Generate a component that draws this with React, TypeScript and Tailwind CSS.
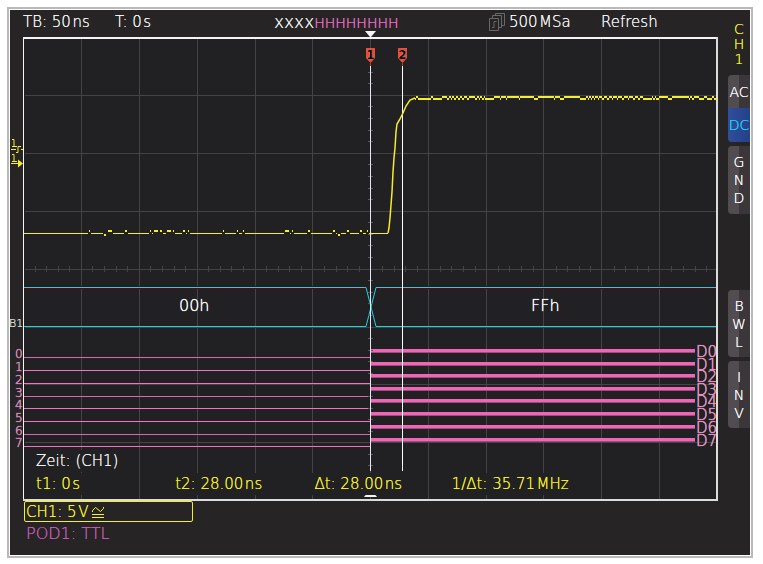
import type { ReactNode } from "react";
import clsx from "clsx";

const GRID_X = [81, 139, 197, 255, 312, 370, 428, 486, 543, 601, 659];
const GRID_Y = [95, 153, 211, 269, 327, 384, 442];
const TICK = 11.58;

const LOW_Y = [357, 370, 383, 396, 408, 421, 434, 446];
const HIGH_Y = [351, 364, 376, 389, 401, 414, 427, 440];

// [start, end, offset] of the noise on the low level
const LOW_NOISE = [
  [89, 90, -2], [104, 106, 2], [108, 112, -2], [125, 127, -2], [150, 151, -2],
  [154, 158, -2], [160, 162, -2], [167, 171, -2], [173, 174, -2],
  [183, 185, -2], [188, 189, -2], [223, 224, -2], [237, 238, -2],
  [243, 244, -2], [285, 289, -2], [292, 293, -2], [308, 310, -2],
  [333, 335, -2], [338, 340, 2], [347, 349, -2], [360, 362, -2],
  [367, 368, -2],
];

// x positions where the high level flips between its two values
const HIGH_FLIPS = [
  415, 416, 418, 431, 433, 442, 447, 449, 451, 452, 454, 456, 458, 460, 462,
  464, 467, 469, 475, 477, 479, 480, 482, 484, 485, 494, 500, 501, 506, 507,
  519, 520, 534, 538, 554, 555, 560, 564, 580, 586, 588, 589, 591, 592, 594,
  595, 598, 599, 602, 604, 607, 609, 612, 613, 617, 618, 622, 624, 628, 629,
  633, 635, 638, 640, 643, 652, 653, 655, 656, 659, 668, 672, 689, 690, 692,
  694, 699, 704, 707, 712, 714, 717,
];

const lowPath =
  "M24 233.5" +
  LOW_NOISE.map(([a, b]) => `H${a - 1}M${b + 1} 233.5`).join("") +
  "H388";

const noisePath = LOW_NOISE.map(([a, b, d]) => `M${a} ${233 + d}H${b}`).join("");

const highPath = HIGH_FLIPS.slice(0, -1)
  .map((x, i) => `M${x} ${i % 2 ? 97 : 99}H${HIGH_FLIPS[i + 1]}`)
  .join("");

const ticks = Array.from({ length: 59 }, (_, i) => i + 1).filter((i) => i % 5);

const Marker = ({ x, label }: { x: number; label: string }) => (
  <g>
    <path d={`M${x - 4} 48h9v10l-3.500 4h-2l-3.500-4z`} fill="#ee4b34" />
    <text
      x={x + 0.5}
      y="59"
      textAnchor="middle"
      className="fill-black text-[12px] font-bold"
    >
      {label}
    </text>
  </g>
);

const Scope = () => (
  <svg
    viewBox="10 37 708 464"
    className="block h-auto w-full overflow-visible"
    role="img"
    aria-label="CH1"
  >
    <rect x="23" y="37" width="695" height="464" fill="#212022" />

    {/* graticule */}
    <g stroke="#444244" shapeRendering="crispEdges">
      {GRID_X.map((x) => (
        <path key={x} d={`M${x + 0.5} 39V499`} />
      ))}
      {GRID_Y.map((y) => (
        <path key={y} d={`M25 ${y + 0.5}H716`} />
      ))}
      {ticks.map((i) => {
        const x = Math.round(23 + i * TICK);
        return <path key={x} d={`M${x + 0.5} 266v6`} />;
      })}
    </g>

    <rect x="23" y="37" width="695" height="2" fill="#f4f4f4" />
    <rect x="23" y="37" width="1" height="464" fill="#f4f4f4" />
    <rect x="716" y="37" width="2" height="464" fill="#dcdcdc" />
    <rect x="23" y="499" width="695" height="2" fill="#dcdcdc" />
    <path d="M365 31h11l-5 6h-1z" fill="#f4f4f4" />
    <path d="M364 497c1-2 3-3 4-4h5c1 1 3 2 4 4z" fill="#f4f4f4" />

    {/* bus */}
    <g fill="none">
      <path d="M24 287.500H366M376 287.500H716" stroke="#4a0d12" strokeWidth="3" />
      <path
        d="M24 287.500H366L376 326.500H716M24 326.500H366L376 287.500H716"
        stroke="#1fd3e0"
      />
    </g>
    <g
      className="fill-white stroke-white text-[16px]"
      strokeOpacity="0.1"
    >
      <text x="179" y="311">00h</text>
      <text x="531" y="311">FFh</text>
    </g>

    {/* digital channels */}
    {LOW_Y.map((y, i) => (
      <g key={y}>
        <path
          d={`M24 ${y + 0.5}H370`}
          stroke={i % 3 ? "#f472c4" : "#d868b0"}
          shapeRendering="crispEdges"
        />
        <rect x="370" y={HIGH_Y[i] - 2} width="325" height="3" fill="#ee66b6" />
        <rect x="370" y={HIGH_Y[i] + 1} width="325" height="1" fill="#a04a80" />
        <text
          x="15"
          y={y + 1}
          strokeOpacity="0.1"
          className="fill-[#e45cbc] stroke-[#e45cbc] text-[12px]"
        >
          {i}
        </text>
        <text
          x="696"
          y={HIGH_Y[i] + 6}
          strokeOpacity="0.1"
          className="fill-[#f070c0] stroke-[#f070c0] text-[15px]"
        >
          {`D${i}`}
        </text>
      </g>
    ))}
    <text x="9" y="327" className="fill-[#d8d8d8] text-[11px]">
      B1
    </text>

    {/* cursors */}
    <g shapeRendering="crispEdges">
      {ticks
        .filter((i) => i > 2 && i < 38)
        .map((i) => (
          <path key={i} d={`M368 ${Math.round(37 + i * TICK) + 0.5}h5`} stroke="#5a585c" />
        ))}
      <path d="M370.500 63V471" stroke="#e6e6ee" />
      <path d="M402.500 63V471" stroke="#ffffff" />
      <path d="M370.500 62v4M402.500 62v4" stroke="#c8362a" />
    </g>
    <Marker x={370} label="1" />
    <Marker x={402} label="2" />

    {/* CH1 trace */}
    <g fill="none" stroke="#f5ee28" shapeRendering="crispEdges">
      <path d={lowPath} />
      <path d={noisePath} strokeWidth="2" />
      <path
        d="M388 233L389 228L390 218L391 205L392 192L393 172L394 158L395 148L396 132L397 124L400 119L403 113L406 106L410 100L415 98"
        strokeWidth="1.500"
        shapeRendering="auto"
      />
      <path d={highPath} strokeWidth="2" />
    </g>

    {/* trigger level and ground position */}
    <g fill="none" stroke="#f5ee28">
      <path d="M12 139.500h2v7M12 146.500h5M11 149.500h5M16 152.500h2v-6h3M21 149.500h2" />
      <path d="M12 154.500h2v7M12 161.500h5M11 163.500h8" />
      <path d="M18 159.500l5 4-5 4z" fill="#f5ee28" stroke="none" />
    </g>
  </svg>
);

const Readout = ({ children }: { children: ReactNode }) => (
  <div>
    <span className="inline-block h-[22px] bg-[#212022] px-1 leading-[22px] whitespace-nowrap">
      {children}
    </span>
  </div>
);

const SideButton = ({
  lines,
  active,
  className,
}: {
  lines: string[];
  active?: boolean;
  className?: string;
}) => (
  <button
    type="button"
    className={clsx(
      "flex w-full flex-col items-center justify-center text-[14px] leading-[18px] [text-shadow:0_0_0_currentColor]",
      active
        ? "bg-linear-to-r from-[#2f4f98] to-[#26408a] text-[#22d4fa]"
        : "bg-linear-to-r from-[#514c50] from-50% to-[#3a3639] to-50% text-white",
      className,
    )}
  >
    {lines.map((l) => (
      <span key={l}>{l}</span>
    ))}
  </button>
);

const App = () => {
  return (
    <div className="bg-white pt-[7px] pr-[10px] pb-[6px] pl-[7px] font-['DejaVu_Sans',sans-serif] font-extralight">
      <div className="border-2 border-[#b9b9b9] bg-white p-px">
        <div className="flex bg-[#272426] pb-[10px] text-[15px] text-[#f4f4f4] [text-shadow:0_0_0_currentColor]">
          <main className="min-w-0 flex-1">
            <header className="grid h-[27px] grid-cols-[92fr_159fr_215fr_112fr_117fr] items-start pl-[13px] leading-6 whitespace-nowrap">
              <span>TB: 50&#8202;ns</span>
              <span>T: 0&#8202;s</span>
              <span>
                <span className="text-[17px]">xxxx</span>
                <span className="text-[14px] text-[#ee70c8]">HHHHHHHH</span>
              </span>
              <span className="flex items-center gap-1">
                <svg viewBox="0 0 16 18" className="h-[18px] w-[16px]" fill="none" stroke="#6a686a">
                  <path d="M.5 5.500h9v12h-9z" />
                  <path d="M3.500 5.500v-3h9v12h-3M6.500 2.500v-2h9v12h-3" />
                  <path d="M3 14.500h2v-6h2.500" />
                </svg>
                500&#8202;MSa
              </span>
              <span>Refresh</span>
            </header>

            <div className="relative">
              <Scope />
              <div className="absolute inset-x-0 bottom-[6px] pl-[22px]">
                <Readout>Zeit: (CH1)</Readout>
                <div className="grid grid-cols-[139fr_139fr_137fr_270fr] text-[#f8f228]">
                  <Readout>t1: 0&#8202;s</Readout>
                  <Readout>t2: 28.00&#8202;ns</Readout>
                  <Readout>Δt: 28.00&#8202;ns</Readout>
                  <Readout>1/Δt: 35.71&#8202;MHz</Readout>
                </div>
              </div>
            </div>

            <footer className="pl-[14px]">
              <div className="flex h-[21px] w-[169px] items-center gap-1 rounded-xs border border-[#f5ee28] pt-px pl-px text-[#f8f228]">
                <span>CH1: 5&#8202;V</span>
                <svg viewBox="0 0 12 12" className="size-3" fill="none" stroke="currentColor">
                  <path d="M.5 6V4.500L3.500 1.500l5 4 3-3V1M0 8.500h12M0 11.500h12" />
                </svg>
              </div>
              <div className="pl-[2px] text-[16px] leading-[23px] text-[#c45ab4]">POD1: TTL</div>
            </footer>
          </main>

          <aside className="ml-[10px] flex w-[22px] flex-col">
            <h2 className="flex h-[65px] flex-col items-center pt-3 text-[14px] leading-[15px] text-[#f8f228]">
              <span>C</span>
              <span>H</span>
              <span>1</span>
            </h2>
            <SideButton lines={["AC"]} className="h-[33px] rounded-tl" />
            <SideButton lines={["DC"]} active className="h-[34px] rounded-bl" />
            <SideButton lines={["G", "N", "D"]} className="mt-1 h-[68px] rounded-l" />
            <SideButton lines={["B", "W", "L"]} className="mt-[76px] h-[67px] rounded-l" />
            <SideButton lines={["I", "N", "V"]} className="mt-1 h-[67px] rounded-l" />
          </aside>
        </div>
      </div>
    </div>
  );
};

export default App;
